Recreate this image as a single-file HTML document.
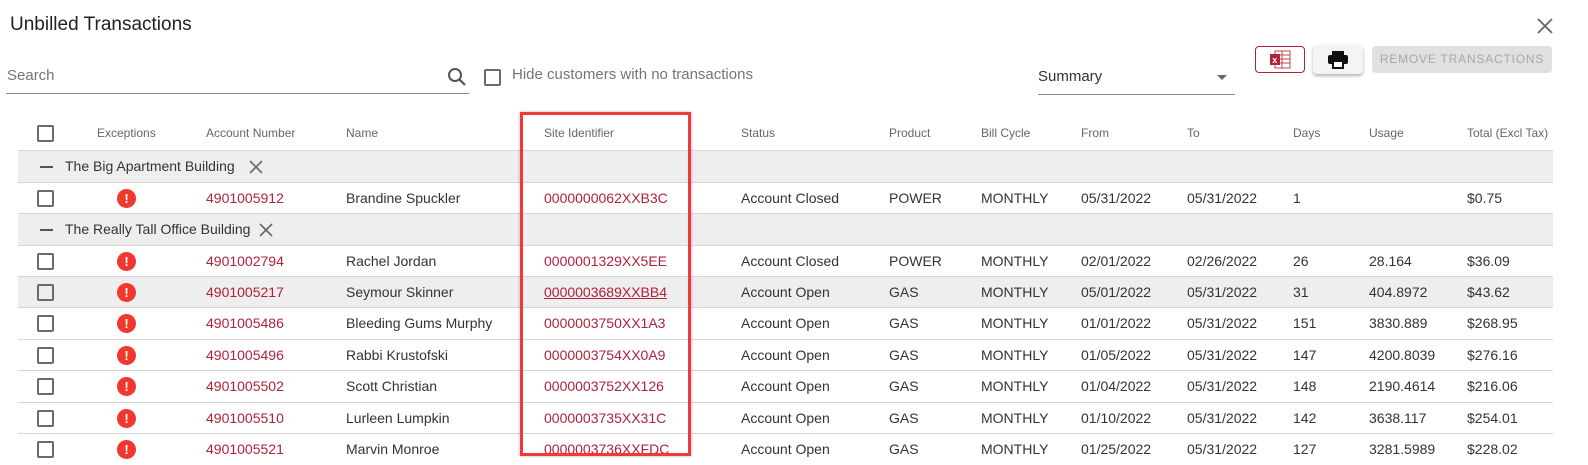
<!DOCTYPE html>
<html><head><meta charset="utf-8"><style>
*{margin:0;padding:0;box-sizing:border-box}
body{width:1588px;height:462px;overflow:hidden;background:#fff;font-family:"Liberation Sans",sans-serif;color:#333;position:relative}
.a{position:absolute;white-space:nowrap}
.title{left:10px;top:14px;font-size:19px;color:#222}
.row{position:absolute;left:18px;width:1535px;border-bottom:1px solid #d6d6d6;font-size:14px}
.g{background:#eee}
.cell{position:absolute;top:0;line-height:31px;white-space:nowrap}
.hd{font-size:12px;color:#666;line-height:36px}
.cb{position:absolute;left:19px;width:17px;height:17px;border:2px solid #6a6a6a;border-radius:2px}
.red{color:#b0223a}
.ex{position:absolute;left:99px;top:6px;width:19px;height:19px;border-radius:50%;background:#f0382f;color:#fff;font-weight:bold;font-size:13px;text-align:center;line-height:19px}
</style></head><body>
<div class="a title">Unbilled Transactions</div>
<svg class="a" style="left:1537px;top:18px" width="16" height="16" viewBox="0 0 16 16"><path d="M1 1L15 15M15 1L1 15" stroke="#666" stroke-width="1.8"/></svg>
<div class="a" style="left:7px;top:67px;font-size:15px;color:#757575">Search</div>
<div class="a" style="left:6px;top:93px;width:463px;height:1px;background:#8a8a8a"></div>
<svg class="a" style="left:447px;top:67px" width="20" height="20" viewBox="0 0 20 20"><circle cx="8" cy="8" r="6" fill="none" stroke="#555" stroke-width="2"/><path d="M12.5 12.5L18 18" stroke="#555" stroke-width="2.2"/></svg>
<div class="a" style="left:484px;top:69px;width:17px;height:17px;border:2px solid #6a6a6a;border-radius:2px"></div>
<div class="a" style="left:512px;top:66px;font-size:15px;color:#757575">Hide customers with no transactions</div>
<div class="a" style="left:1038px;top:68px;font-size:15px;color:#333">Summary</div>
<div class="a" style="left:1217px;top:75px;width:0;height:0;border-left:5px solid transparent;border-right:5px solid transparent;border-top:5px solid #666"></div>
<div class="a" style="left:1038px;top:94px;width:197px;height:1px;background:#8a8a8a"></div>
<div class="a" style="left:1255px;top:46px;width:50px;height:27px;border:1.5px solid #b0223a;border-radius:4px"></div>
<svg class="a" style="left:1270px;top:50px" width="22" height="19" viewBox="0 0 22 19"><rect x="5" y="1" width="15" height="17" fill="none" stroke="#c44" stroke-width="1"/><path d="M5 5H20M5 9H20M5 13H20M12 1V18" stroke="#c44" stroke-width="1"/><rect x="0" y="4" width="10" height="11" fill="#b0223a"/><text x="2.3" y="13" font-size="9" font-weight="bold" fill="#fff" font-family="Liberation Sans">x</text></svg>
<div class="a" style="left:1313px;top:45px;width:50px;height:29px;background:#f4f4f4;border-radius:4px;box-shadow:0 2px 3px rgba(0,0,0,.3)"></div>
<svg class="a" style="left:1327px;top:50px" width="22" height="19" viewBox="0 0 22 19"><rect x="5" y="1" width="12" height="4" fill="#111"/><rect x="1" y="5" width="20" height="9" rx="2" fill="#111"/><rect x="6" y="11" width="10" height="7" fill="#fff" stroke="#111" stroke-width="2"/></svg>
<div class="a" style="left:1372px;top:46px;width:180px;height:27px;background:#e0e0e0;border-radius:4px;color:#a8a8a8;font-size:12px;letter-spacing:.8px;text-align:center;line-height:27px">REMOVE TRANSACTIONS</div>

<div class="row" style="top:115px;height:36px">
<div class="cb" style="top:10px"></div>
<div class="cell hd" style="left:79px">Exceptions</div>
<div class="cell hd" style="left:188px">Account Number</div>
<div class="cell hd" style="left:328px">Name</div>
<div class="cell hd" style="left:526px">Site Identifier</div>
<div class="cell hd" style="left:723px">Status</div>
<div class="cell hd" style="left:871px">Product</div>
<div class="cell hd" style="left:963px">Bill Cycle</div>
<div class="cell hd" style="left:1063px">From</div>
<div class="cell hd" style="left:1169px">To</div>
<div class="cell hd" style="left:1275px">Days</div>
<div class="cell hd" style="left:1351px">Usage</div>
<div class="cell hd" style="left:1449px">Total (Excl Tax)</div>
</div>

<div class="row g" style="top:151px;height:32px"><div class="cell" style="left:22px;width:13px;top:15px;height:2px;background:#555"></div><div class="cell" style="left:47px">The Big Apartment Building</div><svg class="cell" style="left:231px;top:9px" width="14" height="14" viewBox="0 0 14 14"><path d="M1 1L13 13M13 1L1 13" stroke="#666" stroke-width="1.6"/></svg></div>
<div class="row" style="top:183px;height:31px"><div class="cb" style="top:7px"></div><div class="ex">!</div><div class="cell red" style="left:188px">4901005912</div><div class="cell" style="left:328px">Brandine Spuckler</div><div class="cell red" style="left:526px">0000000062XXB3C</div><div class="cell" style="left:723px">Account Closed</div><div class="cell" style="left:871px">POWER</div><div class="cell" style="left:963px">MONTHLY</div><div class="cell" style="left:1063px">05/31/2022</div><div class="cell" style="left:1169px">05/31/2022</div><div class="cell" style="left:1275px">1</div><div class="cell" style="left:1351px"></div><div class="cell" style="left:1449px">$0.75</div></div>
<div class="row g" style="top:214px;height:32px"><div class="cell" style="left:22px;width:13px;top:15px;height:2px;background:#555"></div><div class="cell" style="left:47px">The Really Tall Office Building</div><svg class="cell" style="left:241px;top:9px" width="14" height="14" viewBox="0 0 14 14"><path d="M1 1L13 13M13 1L1 13" stroke="#666" stroke-width="1.6"/></svg></div>

<div class="row" style="top:246px;height:31px"><div class="cb" style="top:7px"></div><div class="ex">!</div><div class="cell red" style="left:188px">4901002794</div><div class="cell" style="left:328px">Rachel Jordan</div><div class="cell red" style="left:526px">0000001329XX5EE</div><div class="cell" style="left:723px">Account Closed</div><div class="cell" style="left:871px">POWER</div><div class="cell" style="left:963px">MONTHLY</div><div class="cell" style="left:1063px">02/01/2022</div><div class="cell" style="left:1169px">02/26/2022</div><div class="cell" style="left:1275px">26</div><div class="cell" style="left:1351px">28.164</div><div class="cell" style="left:1449px">$36.09</div></div>
<div class="row g" style="top:277px;height:31px"><div class="cb" style="top:7px"></div><div class="ex">!</div><div class="cell red" style="left:188px">4901005217</div><div class="cell" style="left:328px">Seymour Skinner</div><div class="cell red" style="left:526px;text-decoration:underline">0000003689XXBB4</div><div class="cell" style="left:723px">Account Open</div><div class="cell" style="left:871px">GAS</div><div class="cell" style="left:963px">MONTHLY</div><div class="cell" style="left:1063px">05/01/2022</div><div class="cell" style="left:1169px">05/31/2022</div><div class="cell" style="left:1275px">31</div><div class="cell" style="left:1351px">404.8972</div><div class="cell" style="left:1449px">$43.62</div></div>
<div class="row" style="top:308px;height:32px"><div class="cb" style="top:7px"></div><div class="ex">!</div><div class="cell red" style="left:188px">4901005486</div><div class="cell" style="left:328px">Bleeding Gums Murphy</div><div class="cell red" style="left:526px">0000003750XX1A3</div><div class="cell" style="left:723px">Account Open</div><div class="cell" style="left:871px">GAS</div><div class="cell" style="left:963px">MONTHLY</div><div class="cell" style="left:1063px">01/01/2022</div><div class="cell" style="left:1169px">05/31/2022</div><div class="cell" style="left:1275px">151</div><div class="cell" style="left:1351px">3830.889</div><div class="cell" style="left:1449px">$268.95</div></div>
<div class="row" style="top:340px;height:31px"><div class="cb" style="top:7px"></div><div class="ex">!</div><div class="cell red" style="left:188px">4901005496</div><div class="cell" style="left:328px">Rabbi Krustofski</div><div class="cell red" style="left:526px">0000003754XX0A9</div><div class="cell" style="left:723px">Account Open</div><div class="cell" style="left:871px">GAS</div><div class="cell" style="left:963px">MONTHLY</div><div class="cell" style="left:1063px">01/05/2022</div><div class="cell" style="left:1169px">05/31/2022</div><div class="cell" style="left:1275px">147</div><div class="cell" style="left:1351px">4200.8039</div><div class="cell" style="left:1449px">$276.16</div></div>
<div class="row" style="top:371px;height:32px"><div class="cb" style="top:7px"></div><div class="ex">!</div><div class="cell red" style="left:188px">4901005502</div><div class="cell" style="left:328px">Scott Christian</div><div class="cell red" style="left:526px">0000003752XX126</div><div class="cell" style="left:723px">Account Open</div><div class="cell" style="left:871px">GAS</div><div class="cell" style="left:963px">MONTHLY</div><div class="cell" style="left:1063px">01/04/2022</div><div class="cell" style="left:1169px">05/31/2022</div><div class="cell" style="left:1275px">148</div><div class="cell" style="left:1351px">2190.4614</div><div class="cell" style="left:1449px">$216.06</div></div>
<div class="row" style="top:403px;height:31px"><div class="cb" style="top:7px"></div><div class="ex">!</div><div class="cell red" style="left:188px">4901005510</div><div class="cell" style="left:328px">Lurleen Lumpkin</div><div class="cell red" style="left:526px">0000003735XX31C</div><div class="cell" style="left:723px">Account Open</div><div class="cell" style="left:871px">GAS</div><div class="cell" style="left:963px">MONTHLY</div><div class="cell" style="left:1063px">01/10/2022</div><div class="cell" style="left:1169px">05/31/2022</div><div class="cell" style="left:1275px">142</div><div class="cell" style="left:1351px">3638.117</div><div class="cell" style="left:1449px">$254.01</div></div>
<div class="row" style="top:434px;height:31px;border-bottom:none"><div class="cb" style="top:7px"></div><div class="ex">!</div><div class="cell red" style="left:188px">4901005521</div><div class="cell" style="left:328px">Marvin Monroe</div><div class="cell red" style="left:526px">0000003736XXFDC</div><div class="cell" style="left:723px">Account Open</div><div class="cell" style="left:871px">GAS</div><div class="cell" style="left:963px">MONTHLY</div><div class="cell" style="left:1063px">01/25/2022</div><div class="cell" style="left:1169px">05/31/2022</div><div class="cell" style="left:1275px">127</div><div class="cell" style="left:1351px">3281.5989</div><div class="cell" style="left:1449px">$228.02</div></div>

<div class="a" style="left:520px;top:112px;width:171px;height:344px;border:3px solid #f0393a;box-shadow:0 0 3px rgba(0,0,0,.3)"></div>
</body></html>
